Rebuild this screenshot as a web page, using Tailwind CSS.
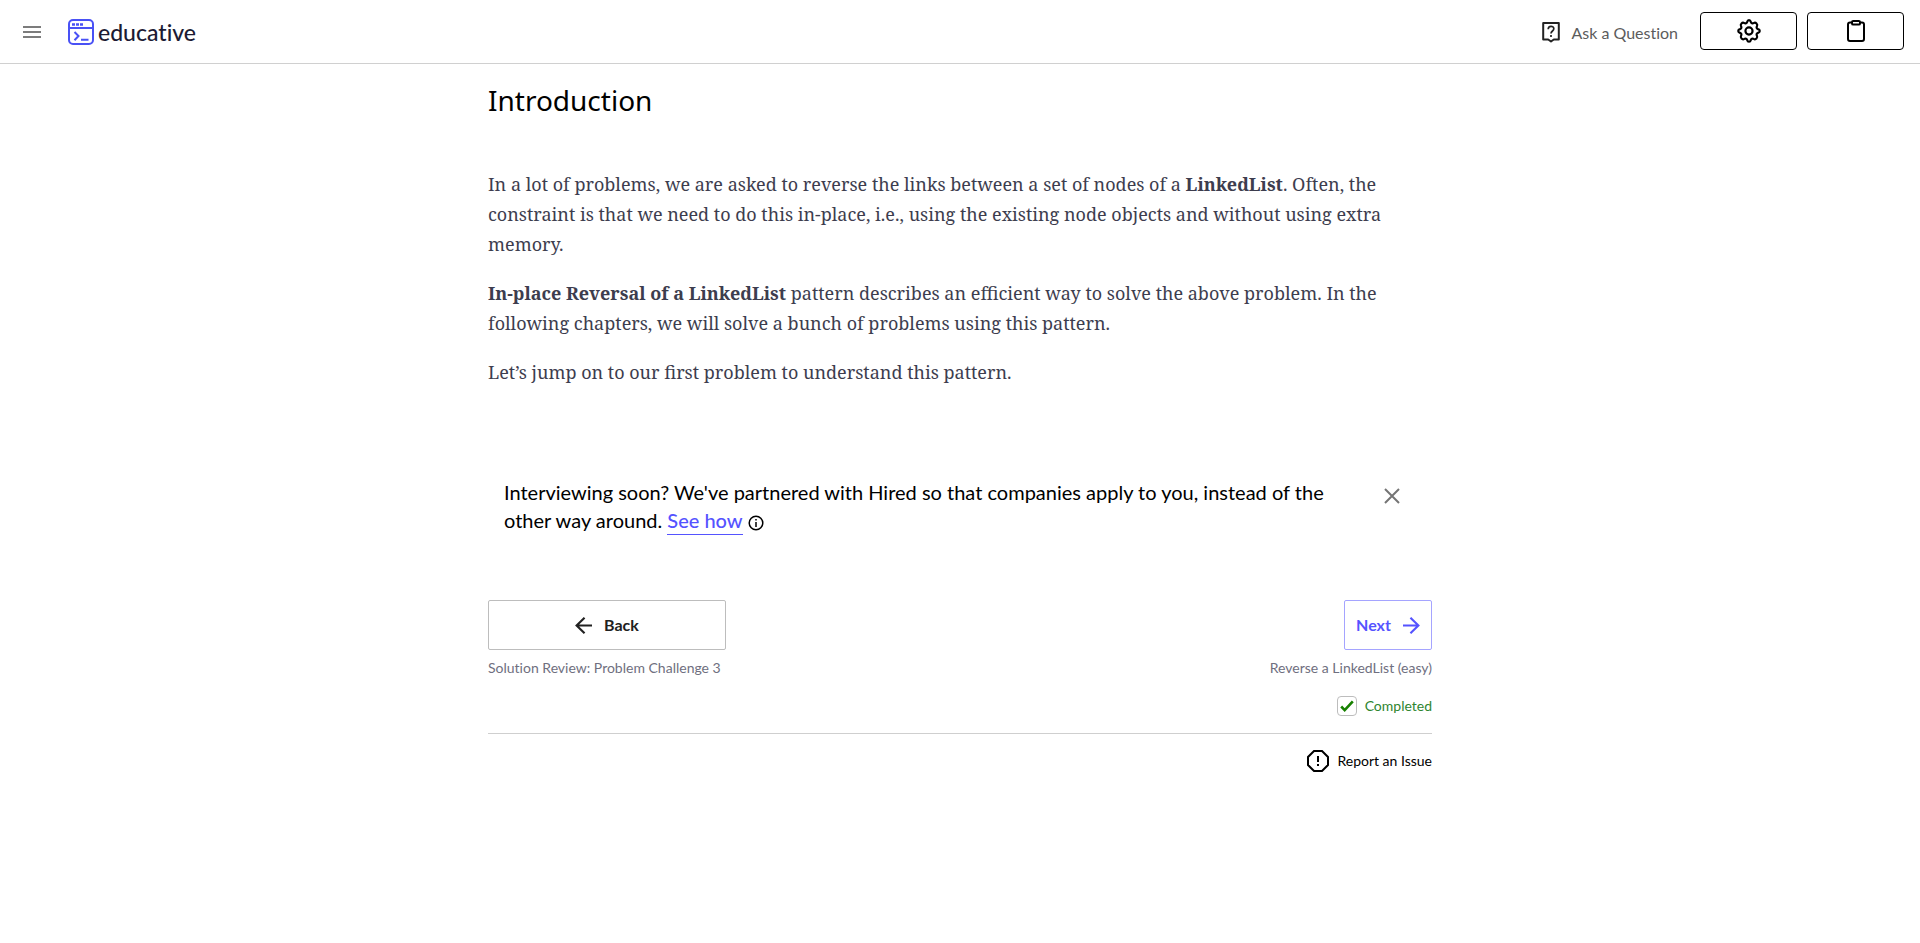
<!DOCTYPE html>
<html lang="en">
<head>
<meta charset="utf-8">
<meta name="viewport" content="width=device-width, initial-scale=1">
<title>Introduction - Educative</title>
<script src="https://cdn.jsdelivr.net/npm/@tailwindcss/browser@4"></script>
</head>
<body class="min-h-screen bg-white font-['Lato',sans-serif] text-black [font-variant-ligatures:none]">
<header class="flex h-16 items-center justify-between border-b border-[#d0d0d0] pr-4 pb-0.5 pl-5">
  <div class="flex items-center gap-6 pt-0.5">
    <button type="button" aria-label="Menu" class="flex size-6 items-center justify-start">
      <svg class="h-3 w-[21px]" viewBox="0 0 21 12" fill="#7c7c7c"><path d="M3 0h18v2H3zM3 5h18v2H3zM3 10h18v2H3z"/></svg>
    </button>
    <a href="#" class="flex items-center gap-1 text-[#1c1b33]">
      <svg class="size-[26px]" viewBox="0 0 26 26" fill="none" stroke="#4951f5" stroke-width="2"><rect x="1" y="1" width="24" height="24" rx="4"/><path d="M1 9h24"/><path d="M4 5.500h3M8 5.500h3M12 5.500h3" stroke-width="2.500"/><path d="M6.500 13l4 4-4 4.200M13 20.700h7.500"/></svg>
      <span class="text-[23px] leading-7 font-medium">educative</span>
    </a>
  </div>
  <div class="flex items-center">
    <a href="#" class="mr-[22px] flex items-center gap-[11px] pt-1 text-base text-[#5c5c5c]">
      <svg class="h-[21px] w-[18px]" viewBox="0 0 18 21" fill="none" stroke="#222" stroke-width="2"><path d="M1.200 1h15.600v16.500h-5L9 19.500l-2.800-2h-5z" stroke-linejoin="round"/><path d="M6.200 7.200c0-3.800 5.600-3.800 5.600-.4 0 2.200-2.800 2.200-2.800 4.700M9 13v2" stroke-width="1.700"/></svg>
      <span>Ask a Question</span>
    </a>
    <div class="flex gap-[10px]">
      <button type="button" aria-label="Settings" class="flex h-[38px] w-[97px] items-center justify-center rounded border border-black">
        <svg class="size-[26px]" viewBox="0 0 24 24" fill="none" stroke="#000" stroke-width="2" stroke-linejoin="round"><circle cx="12" cy="12" r="3.300"/><path d="M10.300 3.600c.5-2.200 2.900-2.200 3.400 0 .3 1.200 1.500 1.700 2.600 1.100 1.900-1.200 4.100 1 3 3-.7 1-.1 2.300 1 2.600 2.200.5 2.200 2.900 0 3.400-1.200.3-1.700 1.600-1 2.600 1.100 2-1.100 4.100-3 3-1.100-.7-2.300-.1-2.600 1-.5 2.200-2.900 2.200-3.400 0-.3-1.100-1.500-1.700-2.600-1-1.900 1.100-4.100-1-3-3 .7-1 .2-2.300-1-2.600-2.200-.5-2.200-2.900 0-3.400 1.100-.3 1.700-1.600 1-2.600-1.100-2 1.100-4.200 3-3 1.100.6 2.300.1 2.600-1.100z"/></svg>
      </button>
      <button type="button" aria-label="Notes" class="flex h-[38px] w-[97px] items-center justify-center rounded border border-black">
        <svg class="h-[22px] w-[18px]" viewBox="0 0 18 22" fill="none" stroke="#000" stroke-width="2"><rect x="1" y="2.500" width="16" height="18.500" rx="2"/><rect x="5" y="1" width="8" height="3.600" rx="1.200" fill="#fff"/></svg>
      </button>
    </div>
  </div>
</header>
<main class="mx-auto max-w-[944px] pt-4">
  <h1 class="font-['Noto_Sans',sans-serif] text-[28px] leading-10">Introduction</h1>
  <article class="mt-[49px] space-y-[19px] font-['Noto_Serif','Liberation_Serif',serif] text-lg leading-[30px] text-[#3d3d4e] [font-variant-ligatures:normal]">
    <p>In a lot of problems, we are asked to reverse the links between a set of nodes of a <strong>LinkedList</strong>. Often, the constraint is that we need to do this in-place, i.e., using the existing node objects and without using extra memory.</p>
    <p><strong>In-place Reversal of a LinkedList</strong> pattern describes an efficient way to solve the above problem. In the following chapters, we will solve a bunch of problems using this pattern.</p>
    <p>Let’s jump on to our first problem to understand this pattern.</p>
  </article>
  <aside class="mt-[91px] flex items-start justify-between gap-8 pr-8 pl-4">
    <p class="text-xl leading-7">Interviewing soon? We've partnered with Hired so that companies apply to you, instead of the other way around. <a href="#" class="inline-block border-b border-[#5553ff] font-medium text-[#5553ff]">See how</a>
      <svg class="inline size-4 align-middle" viewBox="0 0 16 16" fill="none" stroke="#000" stroke-width="1.500"><circle cx="8" cy="8" r="6.800"/><path d="M8 7v5M8 4v1.600"/></svg></p>
    <button type="button" aria-label="Close" class="mt-[10px] flex size-4 shrink-0 items-center justify-center">
      <svg class="size-4" viewBox="0 0 16 16" stroke="#757575" stroke-width="2"><path d="M1 1l14 14M15 1L1 15"/></svg>
    </button>
  </aside>
  <nav class="mt-[65px] flex items-start justify-between text-sm leading-5 text-[#6f6f80]">
    <div class="flex flex-col gap-2">
      <button type="button" class="flex h-[50px] w-[238px] items-center justify-center gap-3 rounded-xs border border-[#bdbdbd] text-base font-bold text-[#212121]">
        <svg class="size-[17px]" viewBox="0 0 16 16" fill="none" stroke="currentColor" stroke-width="2"><path d="M16 8H1.500M9 .7L1.500 8 9 15.300"/></svg>
        Back
      </button>
      <span>Solution Review: Problem Challenge 3</span>
    </div>
    <div class="flex flex-col items-end gap-2">
      <button type="button" class="flex h-[50px] w-[88px] items-center justify-center gap-3 rounded-xs border border-[#a5a4ff] text-base font-bold text-[#5553ff]">
        Next
        <svg class="size-[17px]" viewBox="0 0 16 16" fill="none" stroke="currentColor" stroke-width="2"><path d="M0 8h14.500M7 .7L14.500 8 7 15.300"/></svg>
      </button>
      <span>Reverse a LinkedList (easy)</span>
      <label class="mt-[10px] flex items-center gap-2 text-[#2e8530]">
        <span class="grid size-5 place-items-center">
          <input type="checkbox" checked class="col-start-1 row-start-1 size-5 appearance-none rounded border border-[#bdbdbd] bg-white">
          <svg class="pointer-events-none col-start-1 row-start-1 h-3 w-[14px]" viewBox="0 0 14 12" fill="none" stroke="#178000" stroke-width="2.600"><path d="M1.200 6.500l3.500 3.600L12.800 1.300"/></svg>
        </span>
        Completed
      </label>
    </div>
  </nav>
  <footer class="mt-[17px] flex justify-end border-t border-[#cfcfcf] pt-4">
    <button type="button" class="flex items-center gap-2 text-sm leading-5">
      <svg class="size-[22px]" viewBox="0 0 22 22" fill="none" stroke="#000" stroke-width="2"><path d="M7 1h8l6 6v8l-6 6H7l-6-6V7zM11 6v6M11 14v2"/></svg>
      Report an Issue
    </button>
  </footer>
</main>
</body>
</html>
